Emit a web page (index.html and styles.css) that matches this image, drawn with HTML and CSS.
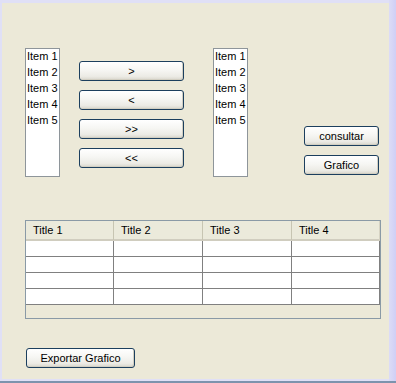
FILE: index.html
```html
<!DOCTYPE html>
<html>
<head>
<meta charset="utf-8">
<link rel="stylesheet" href="styles.css">
</head>
<body>
<div class="window">
  <div class="content">
    <div class="top">
      <ul class="list">
        <li>Item 1</li><li>Item 2</li><li>Item 3</li><li>Item 4</li><li>Item 5</li>
      </ul>
      <div class="movebtns">
        <button class="btn">&gt;</button>
        <button class="btn">&lt;</button>
        <button class="btn">&gt;&gt;</button>
        <button class="btn">&lt;&lt;</button>
      </div>
      <ul class="list list2">
        <li>Item 1</li><li>Item 2</li><li>Item 3</li><li>Item 4</li><li>Item 5</li>
      </ul>
      <div class="actions">
        <button class="btn">consultar</button>
        <button class="btn">Grafico</button>
      </div>
    </div>
    <div class="tablebox">
      <div class="thead">
        <div class="th">Title 1</div>
        <div class="th">Title 2</div>
        <div class="th">Title 3</div>
        <div class="th">Title 4</div>
      </div>
      <div class="tbody">
        <div class="td"></div><div class="td"></div><div class="td"></div><div class="td"></div>
        <div class="td"></div><div class="td"></div><div class="td"></div><div class="td"></div>
        <div class="td"></div><div class="td"></div><div class="td"></div><div class="td"></div>
        <div class="td"></div><div class="td"></div><div class="td"></div><div class="td"></div>
      </div>
    </div>
    <button class="btn export">Exportar Grafico</button>
  </div>
  <div class="edge"></div>
</div>
</body>
</html>
```
FILE: styles.css
```css
* { box-sizing: border-box; }
html, body { margin: 0; padding: 0; }
body {
  font-family: "Liberation Sans", "DejaVu Sans", sans-serif;
  font-size: 11px;
  color: #000;
  background: #dcdcf6;
  overflow: hidden;
}
.window {
  width: 396px;
  height: 383px;
  display: flex;
  align-items: stretch;
  background: #e0e0f6;
  padding: 3px 0 0 2px;
  border-bottom: 2px solid #7d93ad;
}
.content {
  flex: 0 0 387px;
  height: 376px;
  background: #ece9d8;
  padding: 45px 0 0 23px;
}
.edge {
  flex: 1 1 auto;
  margin-top: -3px;
  background: linear-gradient(to right, #dcdcf6, #cfcff6);
}
.top {
  display: flex;
  align-items: flex-start;
}
.list {
  list-style: none;
  margin: 0;
  padding: 0 0 0 1px;
  width: 35px;
  height: 129px;
  background: #fff;
  border: 1px solid #8e959a;
}
.list li {
  height: 16px;
  line-height: 15px;
  white-space: nowrap;
}
.movebtns {
  display: flex;
  flex-direction: column;
  gap: 9px;
  margin: 13px 29px 0 19px;
  width: 105px;
}
.actions {
  display: flex;
  flex-direction: column;
  gap: 9px;
  margin: 78px 0 0 56px;
  width: 75px;
}
.btn {
  height: 20px;
  width: 100%;
  padding: 0;
  font-family: inherit;
  font-size: 11px;
  color: #000;
  border: 1px solid #1c3f5e;
  border-radius: 3px;
  background: linear-gradient(to bottom, #ffffff 0%, #f6f6f3 45%, #ecebe5 80%, #d8d6cc 100%);
  box-shadow: inset -1px -1px 0 #d2cfc2;
}
.tablebox {
  margin-top: 43px;
  width: 356px;
  height: 99px;
  border: 1px solid #8a9aa6;
  background: #ece9d8;
}
.thead {
  display: grid;
  grid-template-columns: 88px 89px 89px 88px;
  height: 20px;
  background: #ebeadb;
  border-bottom: 2px solid #d0cdbf;
}
.th {
  padding-left: 7px;
  line-height: 19px;
  border-right: 1px solid #c7c5b2;
  white-space: nowrap;
}
.th:last-child { border-right: 1px solid #d6d3c3; }
.tbody {
  display: grid;
  grid-template-columns: 87px 88px 88px 87px;
  width: 354px;
  background: #808080;
  gap: 1px;
  padding-bottom: 1px;
  border-right: 1px solid #808080;
}
.td {
  height: 15px;
  background: #fff;
}
.export {
  display: block;
  margin: 29px 0 0 1px;
  width: 109px;
}
```
